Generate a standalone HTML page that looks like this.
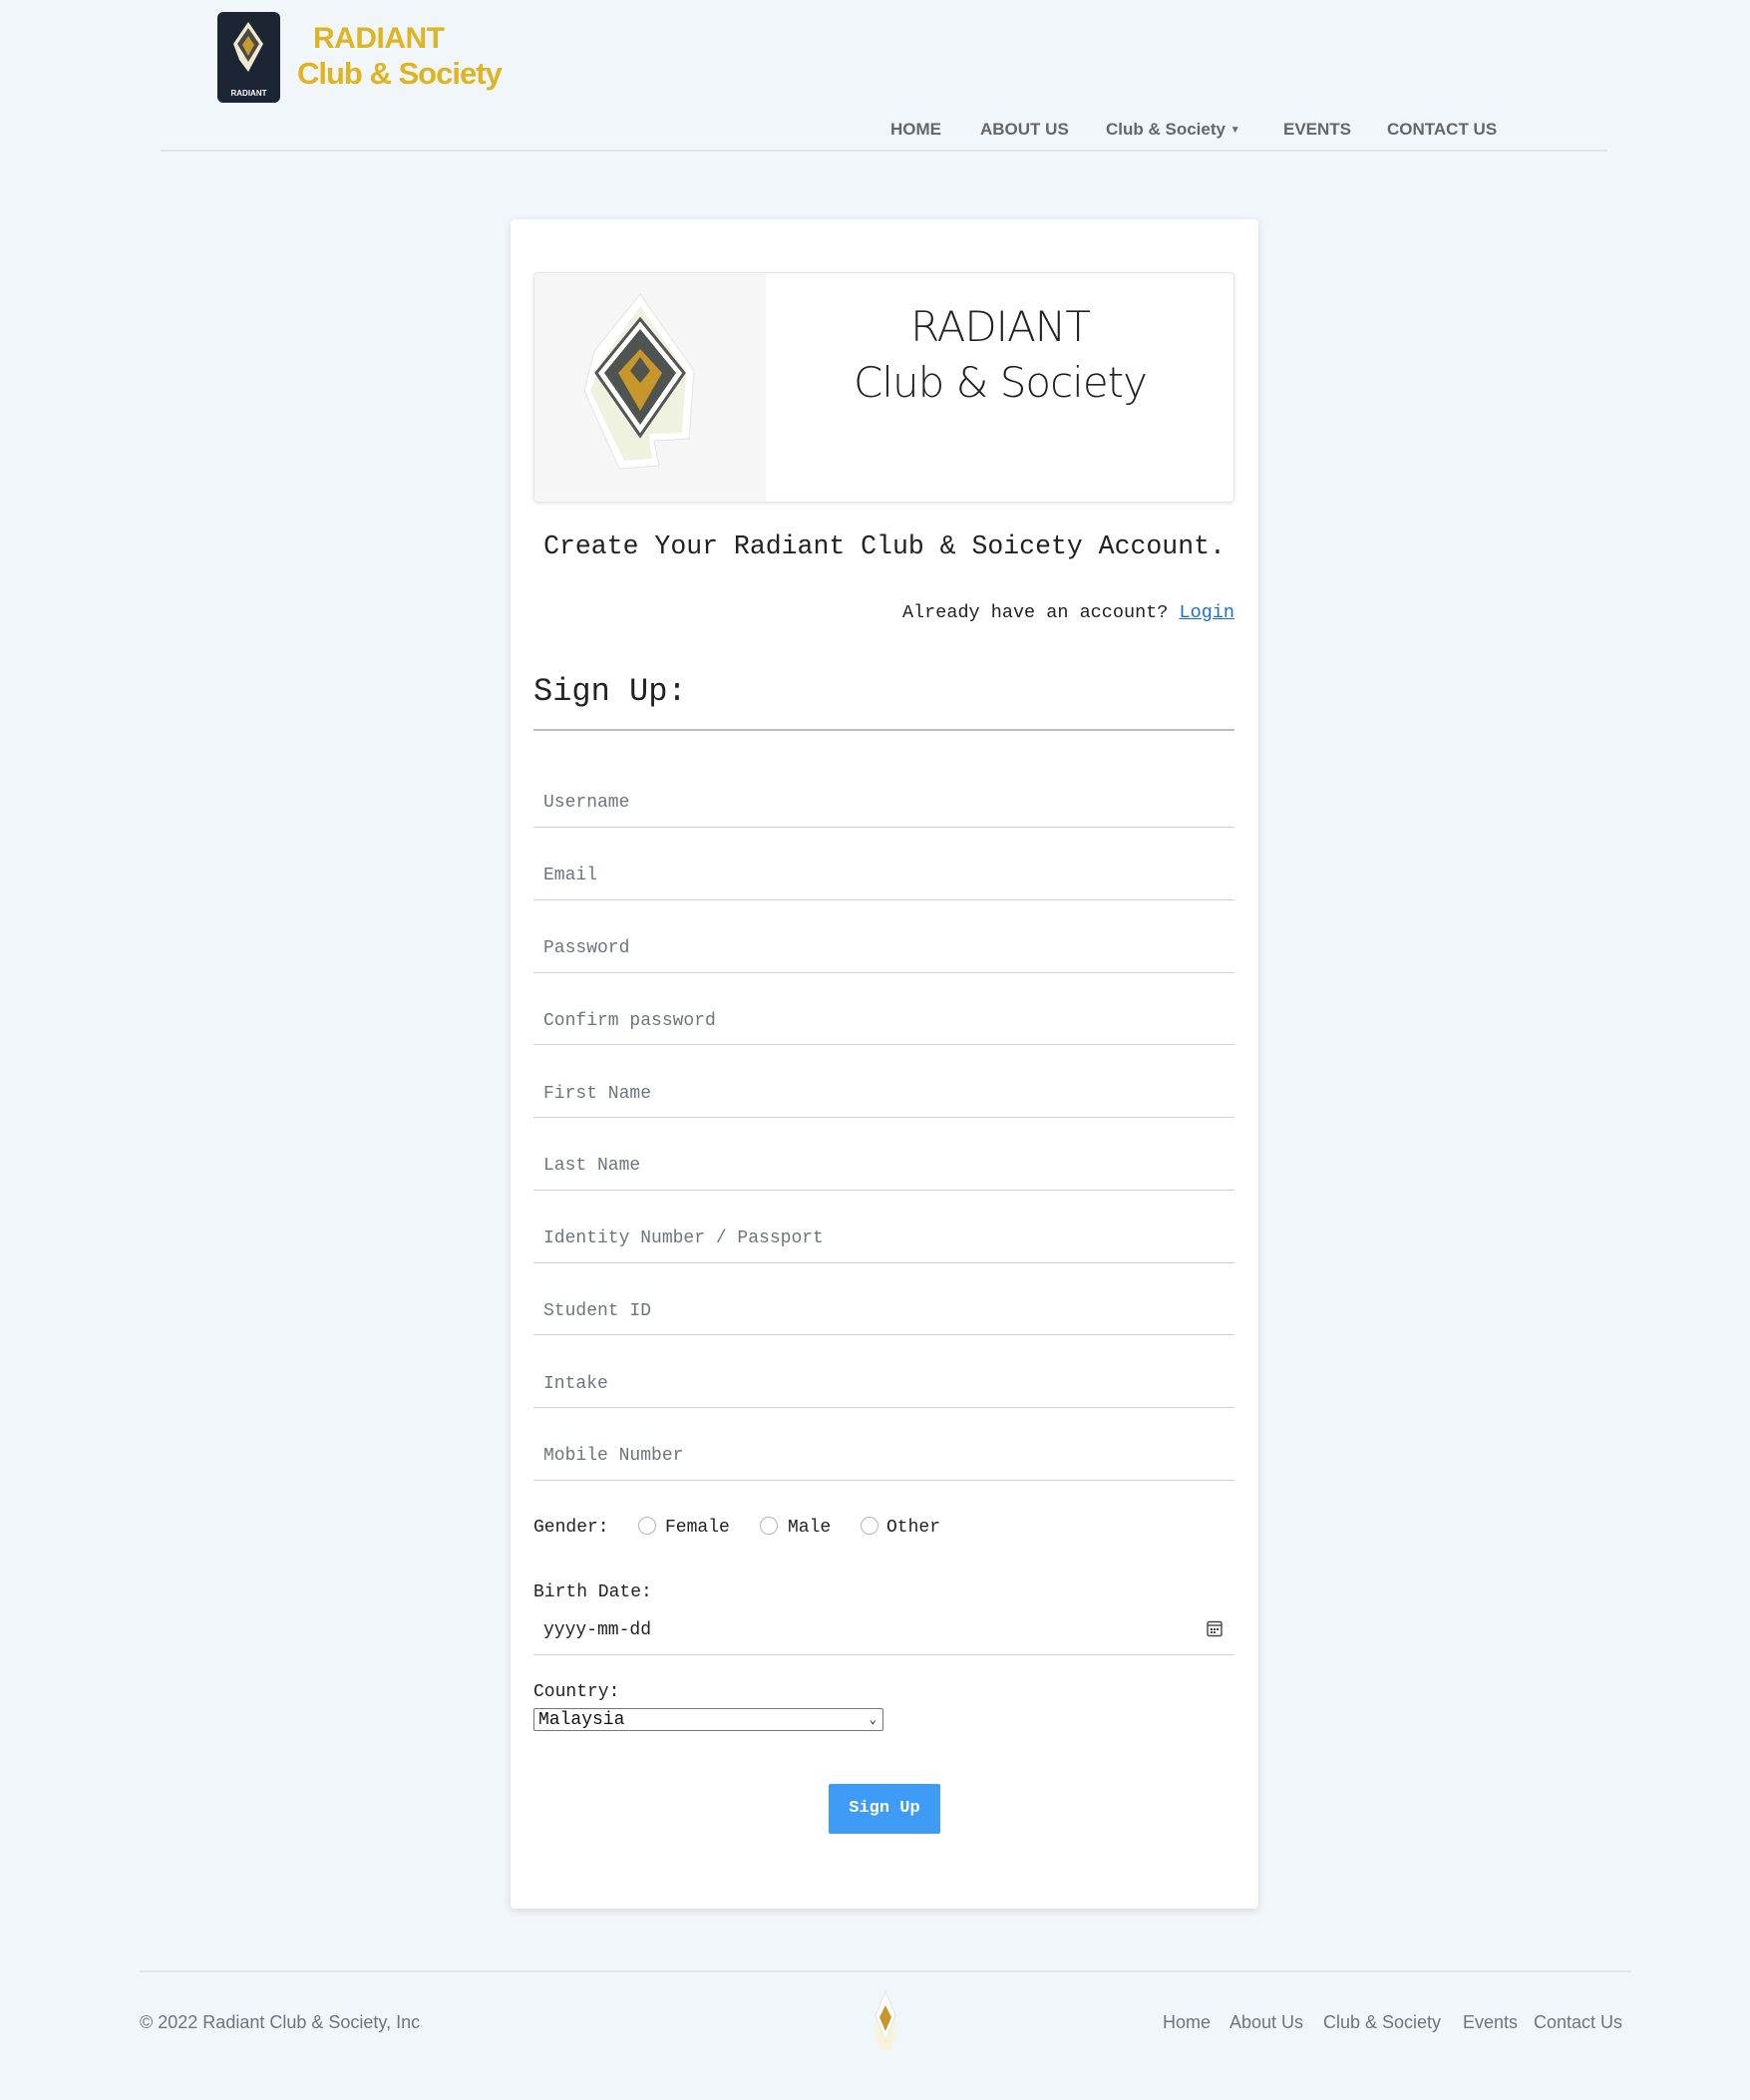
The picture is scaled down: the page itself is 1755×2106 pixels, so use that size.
<!DOCTYPE html>
<html><head><meta charset="utf-8"><style>
*{margin:0;padding:0;box-sizing:border-box}
body{width:1755px;height:2106px;background:#f1f6fa;position:relative;font-family:"Liberation Sans",sans-serif;overflow:hidden}
.a{position:absolute}
.mono{font-family:"Liberation Mono",monospace}
.nav{top:120px;font-size:17px;font-weight:bold;color:#666;white-space:nowrap}
.ph{left:545px;font-size:18px;color:#6c757d;font-family:"Liberation Mono",monospace}
.ln{left:535px;width:703px;height:1px;background:#cfd2d5}
.ft{top:2018px;font-size:18px;color:#6c757d;white-space:nowrap}
.rad{width:18px;height:18px;border:1px solid #b5b5b5;border-radius:50%;background:#fff}
</style></head><body>
<div class="a" style="left:218px;top:12px;width:63px;height:91px;background:#1b2533;border-radius:6px"></div>
<svg class="a" style="left:218px;top:12px" width="63" height="91" viewBox="0 0 63 91">
<path d="M31 10 L46 32 L31 60 L22 48 L16 32 Z" fill="#efe9cf"/>
<path d="M31 16 L42 32 L31 50 L20 32 Z" fill="#4a4a44"/>
<path d="M31 24 L37 33 L31 44 L25 33 Z" fill="#c99a2e"/>
<text x="31.5" y="84" font-size="8" fill="#fff" text-anchor="middle" font-family="Liberation Sans" font-weight="bold">RADIANT</text>
</svg>
<div class="a" style="left:314px;top:22px;font-size:30px;font-weight:bold;color:#e0b420;line-height:34px;letter-spacing:-0.5px">RADIANT</div>
<div class="a" style="left:298px;top:56px;font-size:31px;font-weight:bold;color:#e0b420;line-height:36px;letter-spacing:-1px">Club &amp; Society</div>
<div class="a nav" style="left:893px">HOME</div>
<div class="a nav" style="left:983px">ABOUT US</div>
<div class="a nav" style="left:1109px">Club &amp; Society <span style="font-size:10px;vertical-align:2px">▼</span></div>
<div class="a nav" style="left:1287px">EVENTS</div>
<div class="a nav" style="left:1391px">CONTACT US</div>
<div class="a" style="left:161px;top:150px;width:1451px;height:2px;background:#e2e6ea"></div>

<div class="a" style="left:512px;top:220px;width:750px;height:1694px;background:#fff;border-radius:4px;box-shadow:0 2px 8px rgba(0,0,0,.12)"></div>
<div class="a" style="left:535px;top:273px;width:703px;height:231px;background:#fff;border:1px solid #e5e5e5;border-radius:4px;box-shadow:0 1px 4px rgba(0,0,0,.1);overflow:hidden">
 <div class="a" style="left:0;top:0;width:232px;height:231px;background:#f6f6f6"></div>
 <svg class="a" style="left:40px;top:18px" width="140" height="200" viewBox="0 0 140 200">
  <path d="M66 3 L120 80 L115 148 L80 150 L85 175 L45 178 L10 100 L20 60 Z" fill="#fff" stroke="#e3e3e3"/>
  <path d="M66 15 L112 82 L108 142 L75 143 L78 168 L50 170 L16 100 L28 70 Z" fill="#eef2df"/>
  <path d="M66 28 L110 82 L66 145 L22 82 Z" fill="#fff" stroke="#555" stroke-width="3"/>
  <path d="M66 38 L102 82 L66 134 L30 82 Z" fill="#4f5450"/>
  <path d="M66 58 L88 82 L66 120 L44 82 Z" fill="#c8972c"/>
  <path d="M66 66 L76 80 L66 92 L56 80 Z" fill="#4f5450"/>
 </svg>
 <div class="a" style="left:232px;top:26px;width:470px;text-align:center;font-family:'DejaVu Sans',sans-serif;font-size:42px;line-height:56px;color:#222;font-weight:300;letter-spacing:-1px">RADIANT<br>Club &amp; Society</div>
</div>
<div class="a mono" style="left:512px;width:750px;top:533px;text-align:center;font-size:26.5px;color:#222">Create Your Radiant Club &amp; Soicety Account.</div>
<div class="a mono" style="right:517px;top:604px;font-size:18.5px;color:#222">Already have an account? <span style="color:#1a6ed8;text-decoration:underline">Login</span></div>
<div class="a mono" style="left:535px;top:675px;font-size:32px;color:#222">Sign Up:</div>
<div class="a" style="left:535px;top:731px;width:703px;height:2px;background:#bcbcbc"></div>

<div class="a ph" style="top:795px">Username</div><div class="a ln" style="top:829px"></div>
<div class="a ph" style="top:868px">Email</div><div class="a ln" style="top:902px"></div>
<div class="a ph" style="top:941px">Password</div><div class="a ln" style="top:975px"></div>
<div class="a ph" style="top:1014px">Confirm password</div><div class="a ln" style="top:1047px"></div>
<div class="a ph" style="top:1087px">First Name</div><div class="a ln" style="top:1120px"></div>
<div class="a ph" style="top:1159px">Last Name</div><div class="a ln" style="top:1193px"></div>
<div class="a ph" style="top:1232px">Identity Number / Passport</div><div class="a ln" style="top:1266px"></div>
<div class="a ph" style="top:1305px">Student ID</div><div class="a ln" style="top:1338px"></div>
<div class="a ph" style="top:1378px">Intake</div><div class="a ln" style="top:1411px"></div>
<div class="a ph" style="top:1450px">Mobile Number</div><div class="a ln" style="top:1484px"></div>

<div class="a mono" style="left:535px;top:1522px;font-size:18px;color:#222">Gender:</div>
<div class="a rad" style="left:640px;top:1521px"></div><div class="a mono" style="left:667px;top:1522px;font-size:18px;color:#222">Female</div>
<div class="a rad" style="left:762px;top:1521px"></div><div class="a mono" style="left:790px;top:1522px;font-size:18px;color:#222">Male</div>
<div class="a rad" style="left:863px;top:1521px"></div><div class="a mono" style="left:889px;top:1522px;font-size:18px;color:#222">Other</div>

<div class="a mono" style="left:535px;top:1587px;font-size:18px;color:#222">Birth Date:</div>
<div class="a mono" style="left:545px;top:1625px;font-size:18px;color:#222">yyyy-mm-dd</div>
<svg class="a" style="left:1210px;top:1625px" width="16" height="17" viewBox="0 0 16 17"><rect x="1" y="1.5" width="14" height="14" rx="1.5" fill="none" stroke="#444" stroke-width="1.4"/><line x1="1" y1="5" x2="15" y2="5" stroke="#444" stroke-width="1.4"/><g fill="#444"><rect x="4" y="8" width="2" height="2"/><rect x="7" y="8" width="2" height="2"/><rect x="10" y="8" width="2" height="2"/><rect x="4" y="11" width="2" height="2"/><rect x="7" y="11" width="2" height="2"/></g></svg>
<div class="a ln" style="top:1659px"></div>

<div class="a mono" style="left:535px;top:1687px;font-size:18px;color:#222">Country:</div>
<div class="a mono" style="left:535px;top:1713px;width:351px;height:23px;border:1px solid #767676;border-radius:2px;background:#fff;font-size:18px;color:#111;padding-left:4px;line-height:22px">Malaysia<span style="position:absolute;right:6px;top:0;font-size:12px">&#8964;</span></div>

<div class="a mono" style="left:831px;top:1789px;width:112px;height:50px;background:#3e9bf6;border-radius:2px;color:#fff;font-size:17px;font-weight:bold;text-align:center;line-height:50px">Sign Up</div>

<div class="a" style="left:140px;top:1976px;width:1496px;height:2px;background:#e2e6ea"></div>
<div class="a ft" style="left:140px">© 2022 Radiant Club &amp; Society, Inc</div>
<svg class="a" style="left:870px;top:1995px" width="36" height="66" viewBox="0 0 36 66"><ellipse cx="18" cy="40" rx="10" ry="22" fill="#fbf3c8" opacity=".7"/><path d="M18 2 L28 26 L18 52 L8 26 Z" fill="#fff" stroke="#e5e5e5"/><path d="M18 16 L24 28 L18 42 L12 28 Z" fill="#c8972c"/></svg>
<div class="a ft" style="left:1166px">Home</div>
<div class="a ft" style="left:1233px">About Us</div>
<div class="a ft" style="left:1327px">Club &amp; Society</div>
<div class="a ft" style="left:1467px">Events</div>
<div class="a ft" style="left:1538px">Contact Us</div>
</body></html>
